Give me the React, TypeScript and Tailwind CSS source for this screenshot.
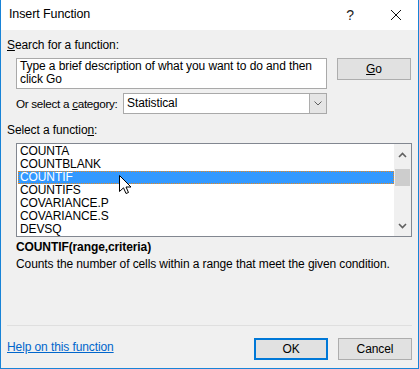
import React from 'react'

const items = ['COUNTA', 'COUNTBLANK', 'COUNTIF', 'COUNTIFS', 'COVARIANCE.P', 'COVARIANCE.S', 'DEVSQ']

const Chevron = ({ up }: { up?: boolean }) => (
  <svg width="9" height="6" viewBox="0 0 9 6" className="block">
    <path
      d={up ? 'M1 5 L4.5 1.5 L8 5' : 'M1 1 L4.5 4.5 L8 1'}
      fill="none"
      stroke="#606060"
      strokeWidth="1.6"
    />
  </svg>
)

export default function App() {
  return (
    <div className="w-[419px] h-[369px] bg-[#f0f0f0] border-x border-b border-[#1883d7] flex flex-col font-['Segoe_UI','Liberation_Sans',sans-serif] text-[12px] leading-[15px] tracking-[-0.1px] text-black relative overflow-hidden">
      {/* Title bar */}
      <div className="h-[30px] bg-white flex items-center pl-[8px] shrink-0">
        <span className="text-[12.5px] pb-[1px]">Insert Function</span>
        <span className="ml-auto text-[14px] text-[#222] mr-[36px]">?</span>
        <svg width="12" height="12" viewBox="0 0 12 12" className="mr-[16px]">
          <path d="M1 1 L11 11 M11 1 L1 11" stroke="#111" strokeWidth="1" />
        </svg>
      </div>

      {/* Body */}
      <div className="flex flex-col pl-[6px] pr-[6px]">
        <div className="mt-[8px] h-[15px]">
          <u>S</u>earch for a function:
        </div>

        <div className="mt-[5px] ml-[9px] flex items-start gap-[10px]">
          <div className="w-[311px] h-[31px] bg-white border border-[#a9a9a9] px-[3px] pt-[1px] leading-[13px]">
            Type a brief description of what you want to do and then click Go
          </div>
          <button className="w-[74px] h-[22px] bg-[#e1e1e1] border border-[#adadad] flex items-center justify-center">
            <span>
              <u>G</u>o
            </span>
          </button>
        </div>

        <div className="mt-[4px] ml-[9px] flex items-center">
          <div className="w-[107px] shrink-0 whitespace-nowrap text-[11.7px] tracking-[-0.3px]">
            Or select a <u>c</u>ategory:
          </div>
          <div className="w-[204px] h-[21px] bg-white border border-[#a9a9a9] flex">
            <div className="flex-1 flex items-center pl-[3px]">Statistical</div>
            <div className="w-[17px] h-full bg-[#e5e5e5] border-l border-[#adadad] flex items-center justify-center">
              <svg width="8" height="5" viewBox="0 0 8 5">
                <path d="M0.5 0.5 L4 4 L7.5 0.5" fill="none" stroke="#606060" strokeWidth="1" />
              </svg>
            </div>
          </div>
        </div>

        <div className="mt-[9px] h-[15px]">
          Select a functio<u>n</u>:
        </div>

        <div className="mt-[5px] ml-[9px] w-[396px] h-[94px] bg-white border border-[#828790] flex p-[1px] pr-0">
          <div className="flex-1 flex flex-col">
            {items.map((name) => (
              <div
                key={name}
                className={
                  name === 'COUNTIF'
                    ? 'h-[13px] leading-[11px] pl-[1px] bg-[#3399ff] text-white border border-dotted border-[#e8891e]'
                    : 'h-[13px] leading-[13px] pl-[2px]'
                }
              >
                {name}
              </div>
            ))}
          </div>
          <div className="w-[17px] -mt-[1px] -mb-[1px] bg-[#f0f0f0] flex flex-col items-center">
            <div className="h-[21px] flex items-center justify-center">
              <Chevron up />
            </div>
            <div className="mt-[4px] w-[15px] h-[17px] bg-[#cdcdcd]" />
            <div className="mt-auto h-[20px] flex items-center justify-center">
              <Chevron />
            </div>
          </div>
        </div>

        <div className="mt-[3px] ml-[9px] font-bold h-[15px]">COUNTIF(range,criteria)</div>
        <div className="mt-[2px] ml-[9px] h-[15px]">
          Counts the number of cells within a range that meet the given condition.
        </div>

        <div className="mt-[53px] h-px w-[405px] bg-[#dfdfdf]" />

        <div className="mt-[12px] flex items-center">
          <a className="text-[#0066cc] underline -mt-[3px]">Help on this function</a>
          <button className="ml-auto w-[74px] h-[22px] bg-[#e1e1e1] border-2 border-[#0078d7] flex items-center justify-center">
            OK
          </button>
          <button className="ml-[10px] w-[74px] h-[22px] bg-[#e1e1e1] border border-[#adadad] flex items-center justify-center">
            Cancel
          </button>
        </div>
      </div>

      {/* Mouse pointer */}
      <svg
        width="13"
        height="20"
        viewBox="0 0 13 20"
        className="absolute left-[118px] top-[175px]"
      >
        <path
          d="M0.5 0.5 L0.5 16.5 L4.5 12.8 L7 18.5 L9.5 17.5 L7 12 L12 12 Z"
          fill="white"
          stroke="black"
          strokeWidth="1"
          strokeLinejoin="miter"
        />
      </svg>
    </div>
  )
}
